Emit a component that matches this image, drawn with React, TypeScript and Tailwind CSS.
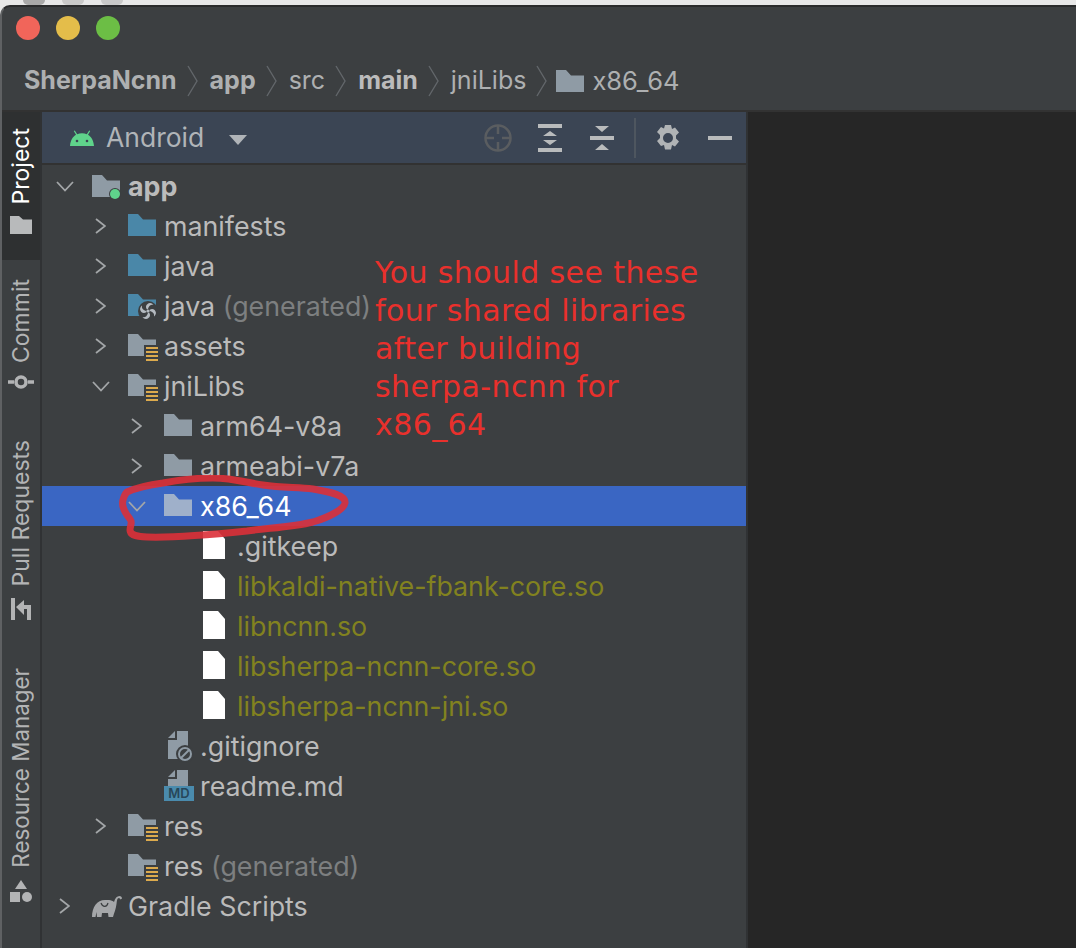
import React from "react";

const font = "font-['Inter','Liberation_Sans',sans-serif]";

// folder glyph used all over the tree
const Folder = ({ color = "#8f9ba5", className = "" }: { color?: string; className?: string }) => (
  <svg viewBox="0 0 28 22" className={`h-[22px] w-[28px] ${className}`}>
    <path d="M0 0h10l5 5.500h13V22H0z" fill={color} />
  </svg>
);

const ResBadge = () => (
  <svg viewBox="-2 -2 14 17" className="absolute left-[16px] top-[11px] h-[17px] w-[14px]">
    <rect x="-2" y="-2" width="14" height="17" fill="#3c3f41" />
    <g fill="#dcaa4d">
      <rect x="0" y="0" width="12" height="2" />
      <rect x="0" y="4" width="12" height="2" />
      <rect x="0" y="8" width="12" height="2" />
      <rect x="0" y="12" width="12" height="2" />
    </g>
  </svg>
);

const blade = "M9 8.500C7 6 8 2.600 12 2c2 .400 3 1.200 3.500 2-2.500-.600-4.500.600-5.500 4z";

const FanBadge = () => (
  <svg viewBox="0 0 20 20" className="absolute left-[10px] top-[7px] h-[20px] w-[20px]">
    <circle cx="10" cy="10" r="10" fill="#3c3f41" />
    <g fill="#b4bac0">
      <circle cx="10" cy="10" r="1.600" />
      <path d={blade} />
      <path d={blade} transform="rotate(90 10 10)" />
      <path d={blade} transform="rotate(180 10 10)" />
      <path d={blade} transform="rotate(270 10 10)" />
    </g>
  </svg>
);

const FileWhite = () => (
  <svg viewBox="0 0 22 28" className="ml-[2px] h-[28px] w-[22px]">
    <path d="M0 0h15l7 8v20H0z" fill="#ffffff" />
  </svg>
);

const GreyFile = () => (
  <svg viewBox="0 0 20 28" className="h-[28px] w-[20px]">
    <path d="M9 0h11v28H0V9h9z" fill="#8f9ba5" />
    <path d="M7 0v7H0z" fill="#8f9ba5" />
  </svg>
);

const ArrowRight = () => (
  <svg viewBox="0 0 11 16" className="ml-[7px] h-[16px] w-[11px]">
    <path d="M1 1l9 7-9 7" fill="none" stroke="#a3a6a8" strokeWidth="1.800" />
  </svg>
);

const ArrowDown = () => (
  <svg viewBox="0 0 18 11" className="ml-[4px] h-[11px] w-[18px]">
    <path d="M1 1l8 8.500L17 1" fill="none" stroke="#a3a6a8" strokeWidth="1.800" />
  </svg>
);

const TreeRow = ({
  indent,
  arrow,
  icon,
  children,
  selected = false,
}: {
  indent: number;
  arrow?: "right" | "down";
  icon: React.ReactNode;
  children: React.ReactNode;
  selected?: boolean;
}) => (
  <div
    className={`flex h-10 items-center ${selected ? "bg-[#3a66c3] text-white" : "text-[#bbbbbb]"}`}
    style={{ paddingLeft: indent }}
  >
    <span className="flex w-[40px] shrink-0 items-center">
      {arrow === "right" && <ArrowRight />}
      {arrow === "down" && <ArrowDown />}
    </span>
    <span className="flex w-[36px] shrink-0 items-center pb-[2px]">{icon}</span>
    <span className="whitespace-nowrap">{children}</span>
  </div>
);

const Gray = ({ children }: { children: React.ReactNode }) => (
  <span className="text-[#7d7f80]">{children}</span>
);

const Olive = ({ children }: { children: React.ReactNode }) => (
  <span className="text-[#82821f]">{children}</span>
);

const Crumb = ({ className = "mr-[12px]" }: { className?: string }) => (
  <svg viewBox="0 0 11 32" className={`ml-[10px] h-[32px] w-[11px] ${className}`}>
    <path d="M1 1l9 15-9 15" fill="none" stroke="#62666a" strokeWidth="1.400" />
  </svg>
);

const ResFolder = () => (
  <span className="relative block h-[22px] w-[28px]">
    <Folder />
    <ResBadge />
  </span>
);

// vertical tool window label, reads bottom to top
const RailLabel = ({
  children,
  icon,
  active = false,
  className = "",
  textClassName = "text-[23px]",
}: {
  children: React.ReactNode;
  icon: React.ReactNode;
  active?: boolean;
  className?: string;
  textClassName?: string;
}) => (
  <div
    className={`flex w-full flex-col-reverse items-center gap-[12px] ${active ? "bg-[#2e3031] text-white" : "text-[#b3b4b5]"} ${className}`}
  >
    {icon}
    <span className={`whitespace-nowrap leading-none [writing-mode:vertical-rl] rotate-180 ${textClassName}`}>{children}</span>
  </div>
);

export default function App() {
  return (
    <div className={`flex h-[948px] w-[1076px] flex-col overflow-hidden bg-[#e8e8e8] ${font}`}>
      <div className="flex h-[5px] shrink-0 gap-[17px] bg-[#e8e8e8] pl-[23px]">
        <span className="h-[5px] w-[22px] rounded-b-full bg-[#a9a9a9]" />
        <span className="h-[5px] w-[22px] rounded-b-full bg-[#c9c9c9]" />
        <span className="h-[5px] w-[22px] rounded-b-full bg-[#c9c9c9]" />
      </div>
      <div className="relative flex min-h-0 flex-1 flex-col overflow-hidden rounded-tl-[10px] border-t-2 border-l-2 border-t-[#2a2b2c] border-l-[#5f6163] bg-[#3c3f41]">
        {/* title bar */}
        <div className="flex h-[45px] shrink-0 items-start gap-[16px] pl-[14px] pt-[9px]">
          <span className="h-6 w-6 rounded-full bg-[#f1655a]" />
          <span className="h-6 w-6 rounded-full bg-[#e4bd4a]" />
          <span className="h-6 w-6 rounded-full bg-[#6cbe45]" />
        </div>

        {/* breadcrumb */}
        <div className="flex h-[60px] shrink-0 items-center border-b-2 border-[#323232] pl-[22px] text-[25px] text-[#aeb0b1]">
          <span className="font-bold">SherpaNcnn</span>
          <Crumb />
          <span className="font-bold">app</span>
          <Crumb />
          <span>src</span>
          <Crumb />
          <span className="font-bold text-[#bbbbbb]">main</span>
          <Crumb />
          <span>jniLibs</span>
          <Crumb className="mr-[9px]" />
          <Folder className="mr-[8px]" />
          <span className="text-[25.500px]">x86_64</span>
        </div>

        <div className="flex min-h-0 flex-1">
          {/* left rail */}
          <div className="flex w-[40px] shrink-0 flex-col items-center border-r-2 border-[#303234] bg-[#3c3f41]">
            <RailLabel
              active
              className="h-[148px] justify-start pb-[26px]"
              icon={
                <svg viewBox="0 0 22 18" className="h-[18px] w-[22px]">
                  <path d="M0 0h9l4 3.500h9V18H0z" fill="#b8babb" />
                </svg>
              }
            >
              Project
            </RailLabel>
            <RailLabel
              className="mt-[19px]"
              icon={
                <svg viewBox="0 0 26 14" className="h-[14px] w-[26px]">
                  <circle cx="13" cy="7" r="5" fill="none" stroke="#b3b4b5" strokeWidth="3.500" />
                  <path d="M0 7h6M20 7h6" stroke="#b3b4b5" strokeWidth="3.500" />
                </svg>
              }
            >
              Commit
            </RailLabel>
            <RailLabel
              className="mt-[51px]"
              icon={
                <svg viewBox="0 0 20 22" className="h-[22px] w-[20px]">
                  <path d="M0 0h4v22H0zM16 7h4v15h-4z" fill="#b3b4b5" />
                  <path d="M5 9l8-7v5h5v4h-5v6z" fill="#b3b4b5" />
                </svg>
              }
            >
              Pull Requests
            </RailLabel>
            <RailLabel
              className="mt-[48px]"
              textClassName="text-[22.400px]"
              icon={
                <svg viewBox="0 0 22 22" className="h-[22px] w-[22px]">
                  <path d="M11 0l6 9H5z" fill="#b3b4b5" />
                  <rect x="0" y="12" width="10" height="10" fill="#b3b4b5" />
                  <circle cx="17" cy="17" r="5" fill="#b3b4b5" />
                </svg>
              }
            >
              Resource Manager
            </RailLabel>
          </div>

          {/* project panel */}
          <div className="relative flex w-[704px] shrink-0 flex-col">
            <div className="flex h-[53px] shrink-0 items-center border-b-2 border-[#323232] bg-[#3b4554]">
              <svg viewBox="0 0 24 16" className="ml-[28px] h-[16px] w-[24px]">
                <path d="M0 16C.500 10 3 6.500 6 4.800L3.800 1l1-.600L7.200 4.200C10 3 14 3 16.800 4.200L19.200.400l1 .600L18 4.800C21 6.500 23.500 10 24 16z" fill="#5fd38b" />
                <circle cx="7" cy="11" r="1.300" fill="#3b4554" />
                <circle cx="17" cy="11" r="1.300" fill="#3b4554" />
              </svg>
              <span className="ml-[12px] text-[26.500px] text-[#b0b4b8]">Android</span>
              <svg viewBox="0 0 18 10" className="ml-[25px] mt-[4px] h-[10px] w-[18px]">
                <path d="M0 0h18l-9 10z" fill="#b0b4b8" />
              </svg>
              <div className="ml-auto flex items-center">
                <svg viewBox="0 0 28 28" className="h-[28px] w-[28px]">
                  <circle cx="14" cy="14" r="12.500" fill="none" stroke="#5a5d60" strokeWidth="2.500" />
                  <path d="M14 1v9M14 18v9M1 14h9M18 14h9" stroke="#5a5d60" strokeWidth="2.500" />
                </svg>
                <svg viewBox="0 0 24 28" className="ml-[26px] h-[28px] w-[24px]">
                  <g fill="#b9bbbc">
                    <rect width="24" height="4" />
                    <rect y="24" width="24" height="4" />
                    <path d="M12 7l7 5H5zM12 21l-7-5h14z" />
                  </g>
                </svg>
                <svg viewBox="0 0 24 24" className="ml-[28px] h-[24px] w-[24px]">
                  <g fill="#b9bbbc">
                    <rect y="10" width="24" height="4" />
                    <path d="M5 0h14l-7 6zM5 24h14l-7-6z" />
                  </g>
                </svg>
                <span className="ml-[20px] h-[40px] w-[2px] bg-[#4e565f]" />
                <svg viewBox="0 0 24 26" className="ml-[20px] h-[26px] w-[24px]">
                  <path
                    fillRule="evenodd"
                    d="M9 0h6l1 4 3-1.500 4 5-3 3v3l3 3-4 5-3-1.500-1 4.500H9l-1-4.500L5 21 1 16l3-3v-3L1 7l4-5 3 1.500zM12 8a5 5 0 100 10 5 5 0 000-10z"
                    fill="#b0b3b5"
                  />
                </svg>
                <span className="ml-[28px] mr-[14px] h-[4px] w-[24px] bg-[#b9bbbc]" />
              </div>
            </div>

            <div className="flex-1 pt-[1px] text-[26.800px] leading-none">
              <TreeRow
                indent={10}
                arrow="down"
                icon={
                  <span className="relative mt-[2px] block h-[22px] w-[28px]">
                    <Folder />
                    <span className="absolute left-[18px] top-[14px] h-[10px] w-[10px] rounded-full bg-[#5fd38b] ring-1 ring-[#3c3f41]" />
                  </span>
                }
              >
                <span className="font-bold">app</span>
              </TreeRow>
              <TreeRow indent={46} arrow="right" icon={<Folder color="#4a87a8" />}>manifests</TreeRow>
              <TreeRow indent={46} arrow="right" icon={<Folder color="#4a87a8" />}>java</TreeRow>
              <TreeRow
                indent={46}
                arrow="right"
                icon={
                  <span className="relative block h-[22px] w-[28px]">
                    <Folder color="#4a87a8" />
                    <FanBadge />
                  </span>
                }
              >
                java <Gray>(generated)</Gray>
              </TreeRow>
              <TreeRow indent={46} arrow="right" icon={<ResFolder />}>assets</TreeRow>
              <TreeRow indent={46} arrow="down" icon={<ResFolder />}>jniLibs</TreeRow>
              <TreeRow indent={82} arrow="right" icon={<Folder />}>arm64-v8a</TreeRow>
              <TreeRow indent={82} arrow="right" icon={<Folder />}>armeabi-v7a</TreeRow>
              <TreeRow indent={82} arrow="down" selected icon={<Folder color="#9fb0ca" />}>x86_64</TreeRow>
              <TreeRow indent={119} icon={<FileWhite />}>.gitkeep</TreeRow>
              <TreeRow indent={119} icon={<FileWhite />}><Olive>libkaldi-native-fbank-core.so</Olive></TreeRow>
              <TreeRow indent={119} icon={<FileWhite />}><Olive>libncnn.so</Olive></TreeRow>
              <TreeRow indent={119} icon={<FileWhite />}><Olive>libsherpa-ncnn-core.so</Olive></TreeRow>
              <TreeRow indent={119} icon={<FileWhite />}><Olive>libsherpa-ncnn-jni.so</Olive></TreeRow>
              <TreeRow
                indent={82}
                icon={
                  <span className="relative ml-[4px] block h-[28px] w-[24px]">
                    <GreyFile />
                    <svg viewBox="0 0 18 18" className="absolute left-[8px] top-[14px] h-[18px] w-[18px]">
                      <circle cx="9" cy="9" r="9" fill="#3c3f41" />
                      <circle cx="9" cy="9" r="6" fill="none" stroke="#8f9ba5" strokeWidth="2" />
                      <path d="M5 13l8-8" stroke="#8f9ba5" strokeWidth="2" />
                    </svg>
                  </span>
                }
              >
                .gitignore
              </TreeRow>
              <TreeRow
                indent={82}
                icon={
                  <span className="relative ml-[4px] block h-[30px] w-[26px]">
                    <GreyFile />
                    <span className="absolute left-[-4px] top-[16px] flex h-[15px] w-[30px] items-center justify-center bg-[#4a8bad] text-[13px] font-semibold leading-none text-[#27475a]">
                      MD
                    </span>
                  </span>
                }
              >
                readme.md
              </TreeRow>
              <TreeRow indent={46} arrow="right" icon={<ResFolder />}>res</TreeRow>
              <TreeRow indent={46} icon={<ResFolder />}>res <Gray>(generated)</Gray></TreeRow>
              <TreeRow
                indent={10}
                arrow="right"
                icon={
                  <svg viewBox="0 0 30 22" className="mt-[2px] h-[22px] w-[30px]">
                    <path
                      d="M0 22C0 12 5 5 13 5h4c2 0 4 1 5 2 1-4 3-6 5.500-6C29 1 30 2 30 3.500l-1.500 1C28 3.500 27.500 3 27 3c-2 0-2 3-2.500 6-.500 5-2.500 9-3.500 13h-4.500l-.500-4h-6l-.500 4H5l-.500-5-1 5z"
                      fill="#a5a7a9"
                    />
                    <path d="M9 8c2 5 6 4 7 0" fill="none" stroke="#3c3f41" strokeWidth="1.200" />
                  </svg>
                }
              >
                Gradle Scripts
              </TreeRow>
            </div>

            {/* red annotation drawn over the tree */}
            <div className="absolute left-[333px] top-[142px] font-['DejaVu_Sans',sans-serif] text-[30px] leading-[38px] tracking-[0.4px] text-[#e9302c]">
              <p>You should see these</p>
              <p>four shared libraries</p>
              <p>after building</p>
              <p>sherpa-ncnn for</p>
              <p>x86_64</p>
            </div>
            <svg viewBox="0 0 232 70" className="pointer-events-none absolute left-[76px] top-[363px] h-[70px] w-[232px]">
              <path
                d="M9 17C20 12 30 10 45 8 60 5 80 3 95 3c20 0 35 5 50 7 20 3 35 2 50 4 17 3 33 6 32 14-1 6-15 14-32 19-20 5-45 6-66 9-29 3-69 7-100 6-9 0-17-2-17-7 0-5 3-7 0-11C7 38 3 32 5 25c1-4 2-6 4-8z"
                fill="none"
                stroke="#dc3038"
                strokeOpacity="0.9"
                strokeWidth="7"
                strokeLinejoin="round"
              />
            </svg>
          </div>

          {/* editor area */}
          <div className="flex-1 border-l-2 border-[#303234] bg-[#262626]" />
        </div>
      </div>
    </div>
  );
}
